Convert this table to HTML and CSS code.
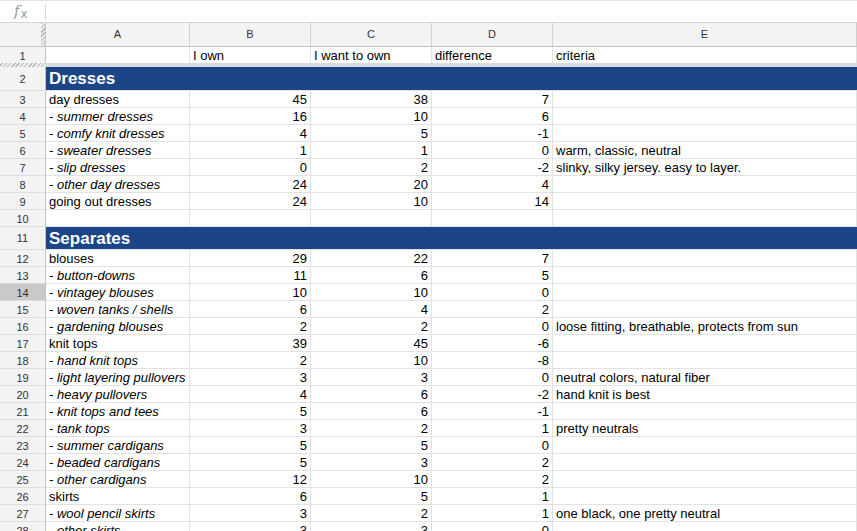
FILE: index.html
```html
<!DOCTYPE html>
<html>
<head>
<meta charset="utf-8">
<link rel="stylesheet" href="styles.css">
</head>
<body>
<div class="fbar"><span class="fx"><i>f</i><span class="fxx">x</span></span><span class="fsep"></span></div>
<div class="sheet">
  <div class="row hdr"><div class="rh corner"></div><div class="ch">A</div><div class="ch">B</div><div class="ch">C</div><div class="ch">D</div><div class="ch">E</div></div>
  <div class="row r1"><div class="rh">1</div><div class="c"></div><div class="c">I own</div><div class="c">I want to own</div><div class="c">difference</div><div class="c">criteria</div></div>
  <div class="freeze"><div class="fz-rh"></div><div class="fz-rest"></div></div>
  <div class="row sec first"><div class="rh">2</div><div class="band">Dresses</div></div>
  <div class="row"><div class="rh">3</div><div class="c">day dresses</div><div class="c n">45</div><div class="c n">38</div><div class="c n">7</div><div class="c"></div></div>
  <div class="row"><div class="rh">4</div><div class="c i">- summer dresses</div><div class="c n">16</div><div class="c n">10</div><div class="c n">6</div><div class="c"></div></div>
  <div class="row"><div class="rh">5</div><div class="c i">- comfy knit dresses</div><div class="c n">4</div><div class="c n">5</div><div class="c n">-1</div><div class="c"></div></div>
  <div class="row"><div class="rh">6</div><div class="c i">- sweater dresses</div><div class="c n">1</div><div class="c n">1</div><div class="c n">0</div><div class="c">warm, classic, neutral</div></div>
  <div class="row"><div class="rh">7</div><div class="c i">- slip dresses</div><div class="c n">0</div><div class="c n">2</div><div class="c n">-2</div><div class="c">slinky, silky jersey. easy to layer.</div></div>
  <div class="row"><div class="rh">8</div><div class="c i">- other day dresses</div><div class="c n">24</div><div class="c n">20</div><div class="c n">4</div><div class="c"></div></div>
  <div class="row"><div class="rh">9</div><div class="c">going out dresses</div><div class="c n">24</div><div class="c n">10</div><div class="c n">14</div><div class="c"></div></div>
  <div class="row"><div class="rh">10</div><div class="c"></div><div class="c"></div><div class="c"></div><div class="c"></div><div class="c"></div></div>
  <div class="row sec"><div class="rh">11</div><div class="band">Separates</div></div>
  <div class="row"><div class="rh">12</div><div class="c">blouses</div><div class="c n">29</div><div class="c n">22</div><div class="c n">7</div><div class="c"></div></div>
  <div class="row"><div class="rh">13</div><div class="c i">- button-downs</div><div class="c n">11</div><div class="c n">6</div><div class="c n">5</div><div class="c"></div></div>
  <div class="row"><div class="rh sel">14</div><div class="c i">- vintagey blouses</div><div class="c n">10</div><div class="c n">10</div><div class="c n">0</div><div class="c"></div></div>
  <div class="row"><div class="rh">15</div><div class="c i">- woven tanks / shells</div><div class="c n">6</div><div class="c n">4</div><div class="c n">2</div><div class="c"></div></div>
  <div class="row"><div class="rh">16</div><div class="c i">- gardening blouses</div><div class="c n">2</div><div class="c n">2</div><div class="c n">0</div><div class="c">loose fitting, breathable, protects from sun</div></div>
  <div class="row"><div class="rh">17</div><div class="c">knit tops</div><div class="c n">39</div><div class="c n">45</div><div class="c n">-6</div><div class="c"></div></div>
  <div class="row"><div class="rh">18</div><div class="c i">- hand knit tops</div><div class="c n">2</div><div class="c n">10</div><div class="c n">-8</div><div class="c"></div></div>
  <div class="row"><div class="rh">19</div><div class="c i">- light layering pullovers</div><div class="c n">3</div><div class="c n">3</div><div class="c n">0</div><div class="c">neutral colors, natural fiber</div></div>
  <div class="row"><div class="rh">20</div><div class="c i">- heavy pullovers</div><div class="c n">4</div><div class="c n">6</div><div class="c n">-2</div><div class="c">hand knit is best</div></div>
  <div class="row"><div class="rh">21</div><div class="c i">- knit tops and tees</div><div class="c n">5</div><div class="c n">6</div><div class="c n">-1</div><div class="c"></div></div>
  <div class="row"><div class="rh">22</div><div class="c i">- tank tops</div><div class="c n">3</div><div class="c n">2</div><div class="c n">1</div><div class="c">pretty neutrals</div></div>
  <div class="row"><div class="rh">23</div><div class="c i">- summer cardigans</div><div class="c n">5</div><div class="c n">5</div><div class="c n">0</div><div class="c"></div></div>
  <div class="row"><div class="rh">24</div><div class="c i">- beaded cardigans</div><div class="c n">5</div><div class="c n">3</div><div class="c n">2</div><div class="c"></div></div>
  <div class="row"><div class="rh">25</div><div class="c i">- other cardigans</div><div class="c n">12</div><div class="c n">10</div><div class="c n">2</div><div class="c"></div></div>
  <div class="row"><div class="rh">26</div><div class="c">skirts</div><div class="c n">6</div><div class="c n">5</div><div class="c n">1</div><div class="c"></div></div>
  <div class="row"><div class="rh">27</div><div class="c i">- wool pencil skirts</div><div class="c n">3</div><div class="c n">2</div><div class="c n">1</div><div class="c">one black, one pretty neutral</div></div>
  <div class="row"><div class="rh">28</div><div class="c i">- other skirts</div><div class="c n">3</div><div class="c n">3</div><div class="c n">0</div><div class="c"></div></div>
</div>
</body>
</html>
```

FILE: styles.css
```css
html, body {
  margin: 0;
  padding: 0;
  background: #fff;
}
body {
  width: 857px;
  height: 531px;
  overflow: hidden;
  font-family: "Liberation Sans", Arial, sans-serif;
  color: #000;
}
.fbar {
  box-sizing: border-box;
  height: 23px;
  border-top: 1px solid #e3e3e3;
  border-bottom: 1px solid #d4d4d4;
  display: flex;
  align-items: center;
}
.fx {
  box-sizing: border-box;
  width: 45px;
  padding-left: 14px;
  color: #9a9a9a;
  font-family: "DejaVu Serif", serif;
  font-size: 15px;
  line-height: 20px;
}
.fx i {
  font-style: italic;
}
.fxx {
  font-family: "DejaVu Sans", sans-serif;
  font-size: 12px;
  position: relative;
  top: 2px;
  margin-left: 1px;
}
.fsep {
  width: 1px;
  height: 16px;
  background: #dcdcdc;
}
.row {
  display: grid;
  grid-template-columns: 46px 144px 121px 121px 121px 304px;
  height: 17px;
}
.row > div {
  box-sizing: border-box;
  border-right: 1px solid #e2e2e2;
  border-bottom: 1px solid #e2e2e2;
  padding: 0 3px;
  font-size: 13px;
  line-height: 18px;
  white-space: nowrap;
  overflow: hidden;
}
.row > .rh {
  background: #f3f3f3;
  border-right-color: #c4c4c4;
  border-bottom-color: #dedede;
  text-align: center;
  font-size: 11px;
  color: #333;
  padding: 0;
}
.row > .rh.sel {
  background: #c9c9c9;
}
.hdr {
  height: 24px;
}
.hdr > .ch {
  background: #f3f3f3;
  border-right-color: #cfcfcf;
  border-bottom-color: #c4c4c4;
  text-align: center;
  font-size: 11px;
  line-height: 23px;
  color: #333;
}
.hdr > .corner {
  border-bottom-color: #c4c4c4;
  background: repeating-linear-gradient(-45deg, #b4b4b4 0 1px, #ececec 1px 3px) right / 4px 100% no-repeat, #f3f3f3;
}
.r1 {
  height: 16px;
}
.r1 > div {
  border-bottom: none;
}
.freeze {
  display: flex;
  height: 4px;
}
.fz-rh {
  width: 46px;
  background: repeating-linear-gradient(-45deg, #b4b4b4 0 1px, #ececec 1px 3px);
}
.fz-rest {
  flex: 1;
  background: #d8dbe0;
}
.sec {
  height: 23px;
}
.sec.first {
  height: 24px;
}
.sec > .rh {
  line-height: 23px;
}
.sec.first > .rh {
  line-height: 24px;
}
.row > .band {
  grid-column: 2 / -1;
  background: #1c4587;
  color: #fff;
  font-weight: bold;
  font-size: 17px;
  line-height: 23px;
  padding-left: 3px;
  border-right: none;
}
.sec.first > .band {
  line-height: 24px;
}
.n {
  text-align: right;
}
.i {
  font-style: italic;
}
```
